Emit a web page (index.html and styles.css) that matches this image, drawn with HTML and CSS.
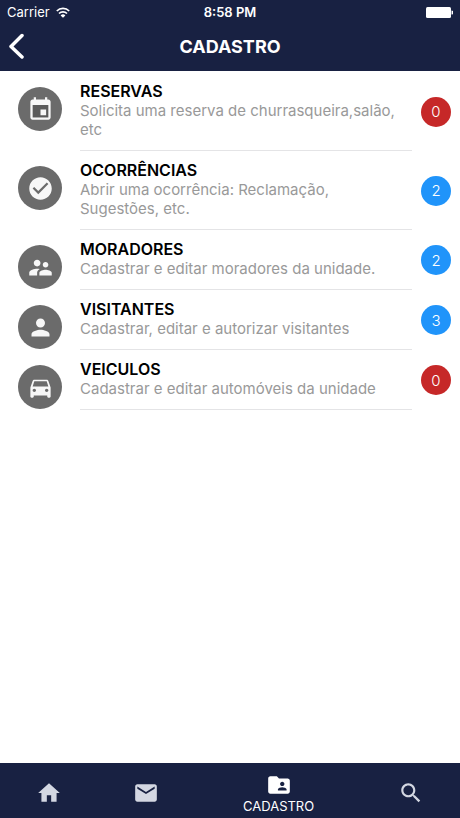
FILE: index.html
```html
<!DOCTYPE html>
<html lang="pt-BR">

<head>
    <meta charset="UTF-8">
    <meta name="viewport" content="width=device-width, initial-scale=1.0">
    <link rel="stylesheet" href="styles.css">
    <title>Cadastro</title>
</head>

<body>
    <header class="header">
        <div class="status-bar">
            <div class="carrier">
                <span>Carrier</span>
                <svg class="wifi" viewBox="0 0 14 11">
                    <path d="M.8 4a8.8 8.8 0 0 1 12.4 0M3 6.5a5.7 5.7 0 0 1 8 0" fill="none" stroke="currentColor" stroke-width="1.7"/>
                    <path d="M7 10.8L4.6 8.4a3.4 3.4 0 0 1 4.8 0z" fill="currentColor"/>
                </svg>
            </div>
            <span class="time">8:58 PM</span>
            <svg class="battery" viewBox="0 0 27 11">
                <rect width="25" height="11" rx="1.5" fill="currentColor"/>
                <path d="M25.5 3.5a2 2 0 0 1 0 4z" fill="currentColor"/>
            </svg>
        </div>
        <div class="nav-bar">
            <button class="back" type="button" aria-label="Voltar">
                <svg class="back-icon" viewBox="0 0 18 26">
                    <path d="M15 2.500L4 13.500L15 24" fill="none" stroke="currentColor" stroke-width="3.5" stroke-linecap="round" stroke-linejoin="round"/>
                </svg>
            </button>
            <h1 class="title">CADASTRO</h1>
        </div>
    </header>

    <main class="list">
        <a class="item" href="#reservas">
            <span class="avatar">
                <svg class="icon" viewBox="0 0 24 24"><path opacity=".15" d="M5 8h14v11H5z" fill="#000"/><path d="M17 12h-5v5h5v-5zM16 1v2H8V1H6v2H5c-1.11 0-1.99.9-1.99 2L3 19c0 1.1.89 2 2 2h14c1.1 0 2-.9 2-2V5c0-1.1-.9-2-2-2h-1V1h-2zm3 18H5V8h14v11z"/></svg>
            </span>
            <span class="content">
                <strong class="name">RESERVAS</strong>
                <span class="description">Solicita uma reserva de churrasqueira,salão, etc</span>
            </span>
            <span class="badge badge-empty">0</span>
        </a>
        <a class="item" href="#ocorrencias">
            <span class="avatar">
                <svg class="icon" viewBox="0 0 24 24"><path d="M12 2C6.48 2 2 6.48 2 12s4.48 10 10 10 10-4.48 10-10S17.52 2 12 2zm-2 15l-5-5 1.41-1.41L10 14.17l7.59-7.59L19 8l-9 9z"/></svg>
            </span>
            <span class="content">
                <strong class="name">OCORRÊNCIAS</strong>
                <span class="description">Abrir uma ocorrência: Reclamação, Sugestões, etc.</span>
            </span>
            <span class="badge">2</span>
        </a>
        <a class="item" href="#moradores">
            <span class="avatar">
                <svg class="icon" viewBox="0 0 24 24"><path d="M16.5 12c1.38 0 2.49-1.12 2.49-2.5S17.88 7 16.5 7C15.12 7 14 8.12 14 9.5s1.12 2.5 2.5 2.5zM9 11c1.66 0 2.99-1.34 2.99-3S10.66 5 9 5C7.34 5 6 6.34 6 8s1.34 3 3 3zm7.5 3c-1.83 0-5.5.92-5.5 2.75V19h11v-2.25c0-1.83-3.67-2.75-5.5-2.75zM9 13c-2.33 0-7 1.17-7 3.5V19h7v-2.25c0-.85.33-2.34 2.37-3.47C10.5 13.1 9.66 13 9 13z"/></svg>
            </span>
            <span class="content">
                <strong class="name">MORADORES</strong>
                <span class="description">Cadastrar e editar moradores da unidade.</span>
            </span>
            <span class="badge">2</span>
        </a>
        <a class="item" href="#visitantes">
            <span class="avatar">
                <svg class="icon" viewBox="0 0 24 24"><path d="M12 12c2.21 0 4-1.79 4-4s-1.79-4-4-4-4 1.79-4 4 1.79 4 4 4zm0 2c-2.67 0-8 1.34-8 4v2h16v-2c0-2.66-5.33-4-8-4z"/></svg>
            </span>
            <span class="content">
                <strong class="name">VISITANTES</strong>
                <span class="description">Cadastrar, editar e autorizar visitantes</span>
            </span>
            <span class="badge">3</span>
        </a>
        <a class="item" href="#veiculos">
            <span class="avatar">
                <svg class="icon" viewBox="0 0 24 24"><path d="M18.92 6.01C18.72 5.42 18.16 5 17.5 5h-11c-.66 0-1.21.42-1.42 1.01L3 12v8c0 .55.45 1 1 1h1c.55 0 1-.45 1-1v-1h12v1c0 .55.45 1 1 1h1c.55 0 1-.45 1-1v-8l-2.08-5.99zM6.5 16c-.83 0-1.5-.67-1.5-1.5S5.67 13 6.5 13s1.5.67 1.5 1.5S7.33 16 6.5 16zm11 0c-.83 0-1.5-.67-1.5-1.5s.67-1.5 1.5-1.5 1.5.67 1.5 1.5-.67 1.5-1.5 1.5zM5 11l1.5-4.5h11L19 11H5z"/></svg>
            </span>
            <span class="content">
                <strong class="name">VEICULOS</strong>
                <span class="description">Cadastrar e editar automóveis da unidade</span>
            </span>
            <span class="badge badge-empty">0</span>
        </a>
    </main>

    <nav class="tabs">
        <a class="tab" href="#home" aria-label="Início">
            <svg class="tab-icon" viewBox="0 0 24 24"><path d="M10 20v-6h4v6h5v-8h3L12 3 2 12h3v8z"/></svg>
        </a>
        <a class="tab" href="#mensagens" aria-label="Mensagens">
            <svg class="tab-icon" viewBox="0 0 24 24"><path d="M20 4H4c-1.1 0-1.99.9-1.99 2L2 18c0 1.1.9 2 2 2h16c1.1 0 2-.9 2-2V6c0-1.1-.9-2-2-2zm0 4l-8 5-8-5V6l8 5 8-5v2z"/></svg>
        </a>
        <a class="tab tab-active" href="#cadastro" aria-current="page">
            <svg class="tab-icon" viewBox="0 0 24 24"><path d="M20 6h-8l-2-2H4c-1.1 0-1.99.9-1.99 2L2 18c0 1.1.9 2 2 2h16c1.1 0 2-.9 2-2V8c0-1.1-.9-2-2-2zm-5 3c1.1 0 2 .9 2 2s-.9 2-2 2-2-.9-2-2 .9-2 2-2zm4 8h-8v-1c0-1.33 2.67-2 4-2s4 .67 4 2v1z"/></svg>
            <span>CADASTRO</span>
        </a>
        <a class="tab" href="#busca" aria-label="Buscar">
            <svg class="tab-icon" viewBox="0 0 24 24"><path d="M15.5 14h-.79l-.28-.27C15.41 12.59 16 11.11 16 9.5 16 5.91 13.09 3 9.5 3S3 5.91 3 9.5 5.91 16 9.5 16c1.61 0 3.09-.59 4.23-1.57l.27.28v.79l5 4.99L20.49 19l-4.99-5zm-6 0C7.01 14 5 11.99 5 9.5S7.01 5 9.5 5 14 7.01 14 9.5 11.99 14 9.5 14z"/></svg>
        </a>
    </nav>
</body>

</html>
```
FILE: styles.css
```css
* {
  box-sizing: border-box;
}

body {
  display: flex;
  flex-direction: column;
  min-height: 100vh;
  margin: 0;
  background: #ffffff;
  font-family: Inter, "Liberation Sans", sans-serif;
}

a {
  color: inherit;
  text-decoration: none;
}

svg {
  display: block;
}

.header {
  padding-bottom: 3px;
  background: #182142;
  color: #ffffff;
}

.status-bar,
.nav-bar {
  display: grid;
  grid-template-columns: 1fr auto 1fr;
  align-items: center;
  padding: 0 7px;
}

.status-bar {
  height: 24px;
  font-size: 13px;
}

.carrier {
  display: flex;
  align-items: center;
  gap: 6px;
}

.wifi {
  width: 14px;
  height: 11px;
}

.time {
  font-weight: 600;
}

.battery {
  justify-self: end;
  width: 27px;
  height: 11px;
}

.nav-bar {
  height: 44px;
}

.back {
  justify-self: start;
  padding: 0;
  border: 0;
  background: none;
  color: inherit;
}

.back-icon {
  width: 18px;
  height: 26px;
}

.title {
  margin: 0;
  font-size: 18px;
  font-weight: 700;
}

.list {
  flex: 1;
  padding-top: 1px;
}

.item {
  display: flex;
  padding: 0 9px 0 18px;
}

.avatar {
  display: flex;
  align-items: center;
  justify-content: center;
  flex: none;
  width: 44px;
  height: 44px;
  margin: 15px 18px 0 0;
  border-radius: 50%;
  background: #6b6b6b;
}

.icon {
  width: 27px;
  height: 27px;
  fill: #f7f7f7;
}

.content {
  flex: 1;
  padding: 10px 8px 11px 0;
  border-bottom: 1px solid #e4e4e6;
  line-height: 19px;
}

.name,
.description {
  display: block;
}

.name {
  color: #000000;
  font-size: 16px;
  font-weight: 600;
}

.description {
  color: #999999;
  font-size: 15px;
}

.badge {
  display: flex;
  align-items: center;
  justify-content: center;
  align-self: center;
  width: 30px;
  height: 30px;
  margin-left: 9px;
  border-radius: 50%;
  background: #2094fa;
  color: #ffffff;
  font-size: 15px;
  font-weight: 300;
}

.badge-empty {
  background: #c62828;
}

.tabs {
  position: sticky;
  bottom: 0;
  display: grid;
  grid-template-columns: 97fr 97fr 168fr 97fr;
  height: 55px;
  background: #182142;
  color: #ffffff;
}

.tab {
  display: flex;
  flex-direction: column;
  align-items: center;
  justify-content: center;
  padding-top: 4px;
  font-size: 13px;
  line-height: 16px;
}

.tab-icon {
  width: 26px;
  height: 26px;
  fill: #d3d7e2;
}

.tab-active .tab-icon {
  fill: #ffffff;
}
```
